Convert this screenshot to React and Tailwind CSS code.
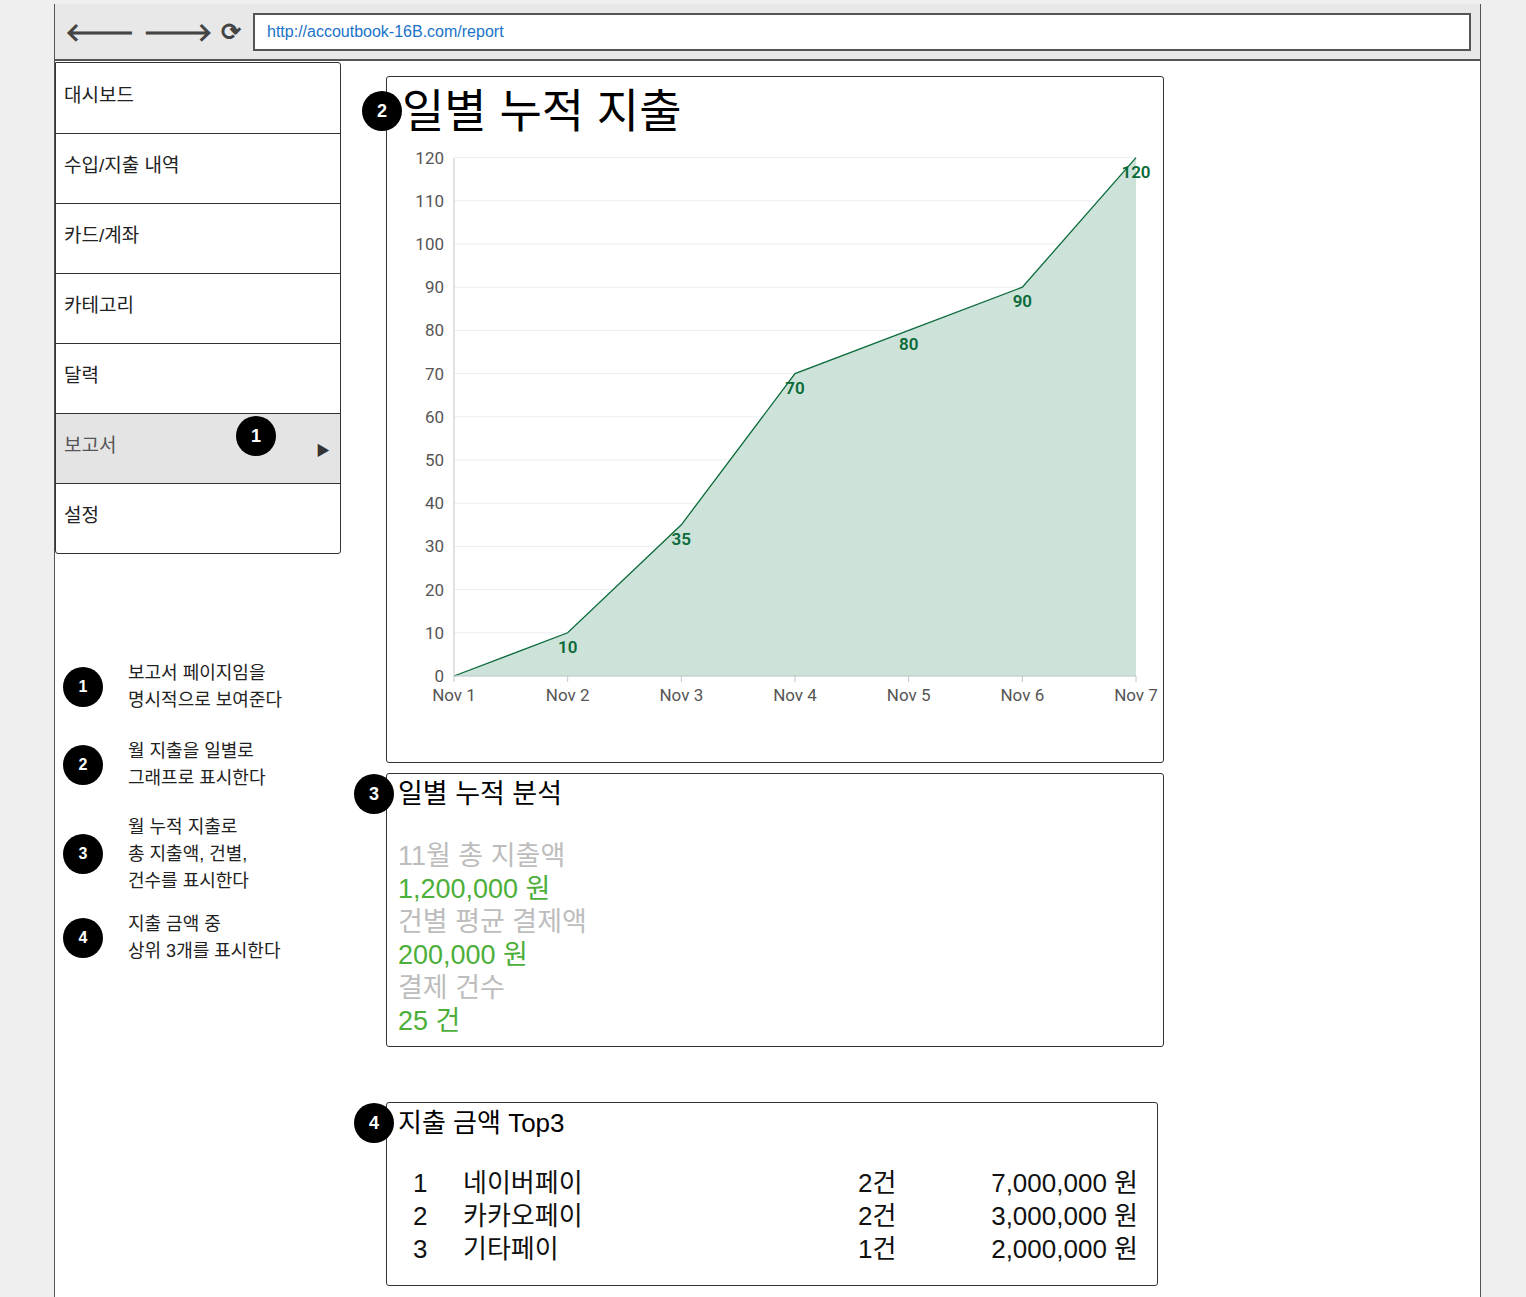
const menu = ["대시보드", "수입/지출 내역", "카드/계좌", "카테고리", "달력", "보고서", "설정"];
const data = [0, 10, 35, 70, 80, 90, 120];
const notes = [
  { n: 1, lines: ["보고서 페이지임을", "명시적으로 보여준다"], h: "h-[87px]" },
  { n: 2, lines: ["월 지출을 일별로", "그래프로 표시한다"], h: "h-[70px]" },
  { n: 3, lines: ["월 누적 지출로", "총 지출액, 건별,", "건수를 표시한다"], h: "h-[108px]" },
  { n: 4, lines: ["지출 금액 중", "상위 3개를 표시한다"], h: "h-[60px]" },
];
const top3 = [
  ["1", "네이버페이", "2건", "7,000,000 원"],
  ["2", "카카오페이", "2건", "3,000,000 원"],
  ["3", "기타페이", "1건", "2,000,000 원"],
];

function Badge({ n, size = "w-10 h-10", text = "text-base" }) {
  return (
    <div className={`${size} ${text} shrink-0 rounded-full bg-black text-white grid place-items-center font-bold`}>
      {n}
    </div>
  );
}

function Chart() {
  const x0 = 67, step = 113.67, y0 = 535, k = 4.32;
  const pts = data.map((v, i) => [x0 + i * step, y0 - v * k]);
  const line = pts.map((p) => p.join(",")).join(" ");
  const area = `${x0},${y0} ${line} ${pts[6][0]},${y0}`;
  const labelPos = [null, [0, 20], [0, 20], [0, 20], [0, 20], [0, 20], [0, 20]];
  return (
    <svg width="777" height="600" className="block" style={{ fontFamily: "Roboto, sans-serif" }}>
      {[0, 1, 2, 3, 4, 5, 6, 7, 8, 9, 10, 11, 12].map((i) => (
        <g key={i}>
          <line x1={x0} x2={pts[6][0]} y1={y0 - i * 43.2} y2={y0 - i * 43.2} stroke="#e8eef4" />
          <text x="57" y={y0 - i * 43.2 + 6} textAnchor="end" fontSize="17" fill="#555">{i * 10}</text>
        </g>
      ))}
      <polygon points={area} fill="#cde2d8" />
      <polyline points={line} fill="none" stroke="#0a6b3a" strokeWidth="1.3" />
      <line x1={x0} x2={x0} y1={17} y2={y0} stroke="#bfc7cc" />
      <line x1={x0} x2={pts[6][0]} y1={y0} y2={y0} stroke="#bfc7cc" />
      {pts.map(([x], i) => (
        <g key={i}>
          <line x1={x} x2={x} y1={y0} y2={y0 + 6} stroke="#bfc7cc" />
          <text x={x} y={y0 + 25} textAnchor="middle" fontSize="17" fill="#555">Nov {i + 1}</text>
        </g>
      ))}
      {pts.map(([x, y], i) =>
        i === 0 ? null : (
          <text key={i} x={x + labelPos[i][0]} y={y + labelPos[i][1]} textAnchor="middle" fontSize="17" fontWeight="600" fill="#0a6b3a">
            {data[i]}
          </text>
        )
      )}
    </svg>
  );
}

export default function App() {
  return (
    <div className="min-h-[1297px] bg-[#efefef] pl-[54px] pr-[45px] pt-[4px]" style={{ fontFamily: "Arial, 'Liberation Sans', 'Noto Sans CJK KR', sans-serif" }}>
      <div className="min-h-[1293px] border-x border-[#555] bg-white">
        <div className="flex h-[57px] items-center gap-2 border-b-2 border-[#555] bg-[#e8e8e8] pl-[10px] pr-[9px]">
          <span className="text-[26px] font-bold leading-none text-[#444]">🡐</span>
          <span className="text-[26px] font-bold leading-none text-[#444]">🡒</span>
          <span className="text-[24px] font-bold leading-none text-[#444]">⟳</span>
          <div className="ml-1 flex h-[38px] flex-1 items-center border-2 border-[#555] bg-white px-3 text-[16px] text-[#1a73c8]">
            http://accoutbook-16B.com/report
          </div>
        </div>
        <div className="flex">
          <div className="w-[286px] shrink-0">
            <div className="mt-[1px] rounded-b-[3px] rounded-tr-[3px] border border-[#333]">
              {menu.map((m, i) => (
                <div key={m} className={`relative flex h-[70px] items-center px-[8px] pb-[4px] text-[19px] text-[#222] ${i > 0 ? "border-t border-[#333]" : ""} ${m === "보고서" ? "bg-[#e4e4e4] text-[#555]" : ""}`}>
                  {m}
                  {m === "보고서" && (
                    <>
                      <div className="absolute left-[180px] top-[2px]"><Badge n={1} size="w-[40px] h-[40px]" text="text-[18px]" /></div>
                      <span className="absolute right-[10px] top-[26px] text-[14px] text-[#333]">▶</span>
                    </>
                  )}
                </div>
              ))}
            </div>
            <div className="mt-[99px] pl-[8px]">
              {notes.map((t) => (
                <div key={t.n} className={`flex items-center gap-[25px] ${t.h} pb-[20px]`}>
                  <Badge n={t.n} />
                  <div className="text-[18px] leading-[27px] text-[#222]">
                    {t.lines.map((l) => <div key={l}>{l}</div>)}
                  </div>
                </div>
              ))}
            </div>
          </div>
          <div className="ml-[45px] flex w-[778px] flex-col">
            <div className="relative mt-[15px] h-[687px] rounded-[3px] border border-[#333]">
              <div className="flex items-center pl-[0px] pt-[4px]">
                <div className="-ml-[25px]"><Badge n={2} size="w-[40px] h-[40px]" text="text-[18px]" /></div>
                <div className="text-[46px] leading-[60px] text-black">일별 누적 지출</div>
              </div>
              <Chart />
            </div>
            <div className="relative mt-[10px] h-[274px] rounded-[3px] border border-[#333] pl-[11px]">
              <div className="-ml-[44px] flex items-center gap-[4px] pt-[0px]">
                <Badge n={3} size="w-[40px] h-[40px]" text="text-[18px]" />
                <div className="text-[27px] leading-[40px]">일별 누적 분석</div>
              </div>
              <div className="mt-[26px] text-[27px] leading-[33px]">
                <div className="text-[#bdbdbd]">11월 총 지출액</div>
                <div className="text-[#4caf3a]">1,200,000 원</div>
                <div className="text-[#bdbdbd]">건별 평균 결제액</div>
                <div className="text-[#4caf3a]">200,000 원</div>
                <div className="text-[#bdbdbd]">결제 건수</div>
                <div className="text-[#4caf3a]">25 건</div>
              </div>
            </div>
            <div className="relative mt-[55px] h-[184px] w-[772px] rounded-[3px] border border-[#333] pl-[11px]">
              <div className="-ml-[44px] flex items-center gap-[4px] pt-[0px]">
                <Badge n={4} size="w-[40px] h-[40px]" text="text-[18px]" />
                <div className="text-[26px] leading-[38px]">지출 금액 Top3</div>
              </div>
              <div className="mt-[24px] text-[26px] leading-[33px] text-[#111]">
                {top3.map(([r, name, c, amt]) => (
                  <div key={r} className="flex">
                    <span className="w-[65px] pl-[15px]">{r}</span>
                    <span className="w-[395px]">{name}</span>
                    <span className="w-[50px]">{c}</span>
                    <span className="w-[230px] text-right">{amt}</span>
                  </div>
                ))}
              </div>
            </div>
          </div>
        </div>
      </div>
    </div>
  );
}
